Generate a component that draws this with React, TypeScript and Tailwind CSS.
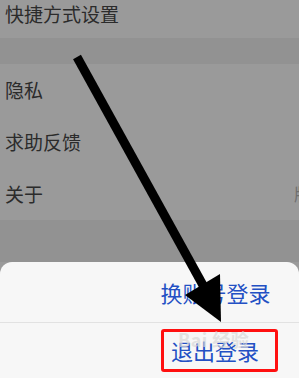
export default function App() {
  const rows = ["隐私", "求助反馈", "关于"];
  return (
    <div
      className="relative w-[299px] h-[378px] overflow-hidden bg-[#9a9a9a]"
      style={{ fontFamily: '"Noto Sans CJK SC", "Noto Sans", sans-serif' }}
    >
      <div className="flex flex-col">
        <div className="h-[38px] flex items-start pl-[5px] text-[19px] leading-[28px] text-[#2b2b2b]">
          快捷方式设置
        </div>
        <div className="h-[26px] bg-[#929292]" />
        {rows.map((r) => (
          <div
            key={r}
            className="h-[52px] flex items-center justify-between pl-[5px] text-[19px] text-[#2b2b2b]"
          >
            <span>{r}</span>
            {r === "关于" && (
              <span className="text-[17px] text-[#6e6e6e] -mr-[12px]">版</span>
            )}
          </div>
        ))}
        <div className="h-[42px] bg-[#929292]" />
        <div className="h-[116px] bg-[#f7f7f7] rounded-t-[12px] flex flex-col">
          <div className="h-[61px] flex items-center justify-center pl-[132px] border-b border-[#e2e2e2] text-[22px] text-[#2350c4]">
            换账号登录
          </div>
          <div className="flex-1 flex items-start justify-center pl-[140px] pt-[6px]">
            <span className="h-[43px] flex items-center pl-[7px] pr-[16px] border-[3px] border-[#ff1010] rounded-[3px] text-[22px] text-[#2350c4]">
              退出登录
            </span>
          </div>
        </div>
      </div>

      <div className="absolute left-[178px] top-[326px] text-[18px] font-bold text-[#d8d8d8] opacity-70 tracking-wide">
        Bai 经验
      </div>

      <svg className="absolute inset-0" width="299" height="378" viewBox="0 0 299 378">
        <line x1="77" y1="57" x2="204" y2="287" stroke="#000" strokeWidth="9" />
        <polygon points="185,295 220,274 221,322" fill="#000" />
      </svg>
    </div>
  );
}
